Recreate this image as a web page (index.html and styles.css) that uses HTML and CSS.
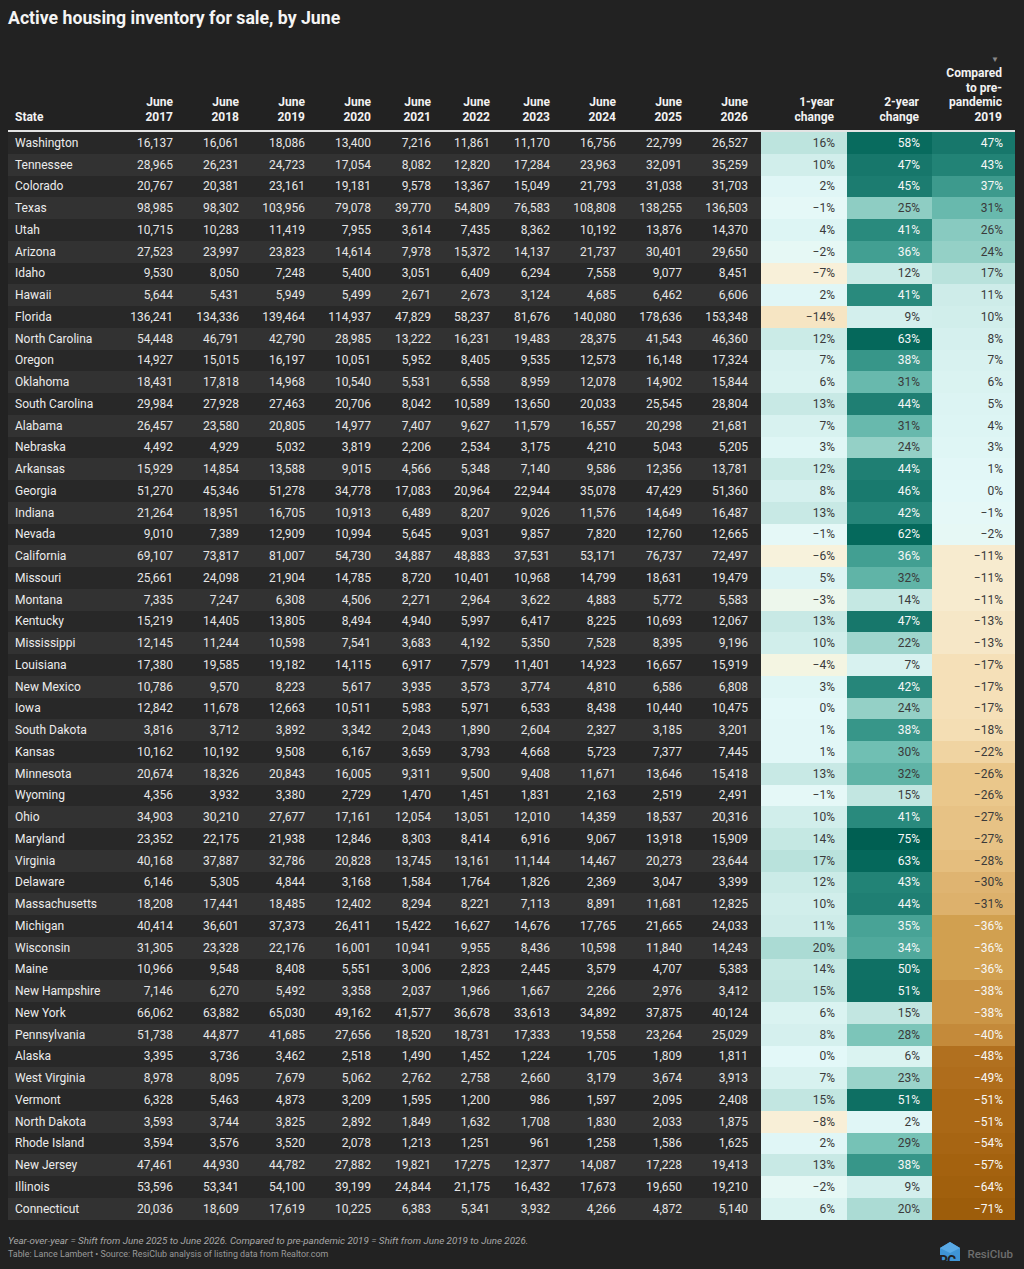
FILE: index.html
```html
<!DOCTYPE html>
<html lang="en">
<head>
<meta charset="utf-8">
<title>Active housing inventory for sale, by June</title>
<link rel="stylesheet" href="styles.css">
</head>
<body>
<div class="page">
  <h1 class="title">Active housing inventory for sale, by June</h1>
  <table class="inv">
    <colgroup>
      <col class="c-state"><col class="c-w"><col class="c-w"><col class="c-w"><col class="c-w">
      <col class="c-n"><col class="c-n2"><col class="c-n"><col class="c-w"><col class="c-w"><col class="c-w">
      <col class="c-h1"><col class="c-h2"><col class="c-h3">
    </colgroup>
    <thead>
      <tr>
        <th class="state">State</th>
        <th>June<br>2017</th><th>June<br>2018</th><th>June<br>2019</th><th>June<br>2020</th><th>June<br>2021</th>
        <th>June<br>2022</th><th>June<br>2023</th><th>June<br>2024</th><th>June<br>2025</th><th>June<br>2026</th>
        <th>1-year<br>change</th><th>2-year<br>change</th>
        <th><span class="sort">▼</span>Compared<br>to pre-<br>pandemic<br>2019</th>
      </tr>
    </thead>
    <tbody>
<tr><td class="state">Washington</td><td>16,137</td><td>16,061</td><td>18,086</td><td>13,400</td><td>7,216</td><td>11,861</td><td>11,170</td><td>16,756</td><td>22,799</td><td>26,527</td><td class="heat">16%</td><td class="heat">58%</td><td class="heat">47%</td></tr>
<tr><td class="state">Tennessee</td><td>28,965</td><td>26,231</td><td>24,723</td><td>17,054</td><td>8,082</td><td>12,820</td><td>17,284</td><td>23,963</td><td>32,091</td><td>35,259</td><td class="heat">10%</td><td class="heat">47%</td><td class="heat">43%</td></tr>
<tr><td class="state">Colorado</td><td>20,767</td><td>20,381</td><td>23,161</td><td>19,181</td><td>9,578</td><td>13,367</td><td>15,049</td><td>21,793</td><td>31,038</td><td>31,703</td><td class="heat">2%</td><td class="heat">45%</td><td class="heat">37%</td></tr>
<tr><td class="state">Texas</td><td>98,985</td><td>98,302</td><td>103,956</td><td>79,078</td><td>39,770</td><td>54,809</td><td>76,583</td><td>108,808</td><td>138,255</td><td>136,503</td><td class="heat">−1%</td><td class="heat">25%</td><td class="heat">31%</td></tr>
<tr><td class="state">Utah</td><td>10,715</td><td>10,283</td><td>11,419</td><td>7,955</td><td>3,614</td><td>7,435</td><td>8,362</td><td>10,192</td><td>13,876</td><td>14,370</td><td class="heat">4%</td><td class="heat">41%</td><td class="heat">26%</td></tr>
<tr><td class="state">Arizona</td><td>27,523</td><td>23,997</td><td>23,823</td><td>14,614</td><td>7,978</td><td>15,372</td><td>14,137</td><td>21,737</td><td>30,401</td><td>29,650</td><td class="heat">−2%</td><td class="heat">36%</td><td class="heat">24%</td></tr>
<tr><td class="state">Idaho</td><td>9,530</td><td>8,050</td><td>7,248</td><td>5,400</td><td>3,051</td><td>6,409</td><td>6,294</td><td>7,558</td><td>9,077</td><td>8,451</td><td class="heat">−7%</td><td class="heat">12%</td><td class="heat">17%</td></tr>
<tr><td class="state">Hawaii</td><td>5,644</td><td>5,431</td><td>5,949</td><td>5,499</td><td>2,671</td><td>2,673</td><td>3,124</td><td>4,685</td><td>6,462</td><td>6,606</td><td class="heat">2%</td><td class="heat">41%</td><td class="heat">11%</td></tr>
<tr><td class="state">Florida</td><td>136,241</td><td>134,336</td><td>139,464</td><td>114,937</td><td>47,829</td><td>58,237</td><td>81,676</td><td>140,080</td><td>178,636</td><td>153,348</td><td class="heat">−14%</td><td class="heat">9%</td><td class="heat">10%</td></tr>
<tr><td class="state">North Carolina</td><td>54,448</td><td>46,791</td><td>42,790</td><td>28,985</td><td>13,222</td><td>16,231</td><td>19,483</td><td>28,375</td><td>41,543</td><td>46,360</td><td class="heat">12%</td><td class="heat">63%</td><td class="heat">8%</td></tr>
<tr><td class="state">Oregon</td><td>14,927</td><td>15,015</td><td>16,197</td><td>10,051</td><td>5,952</td><td>8,405</td><td>9,535</td><td>12,573</td><td>16,148</td><td>17,324</td><td class="heat">7%</td><td class="heat">38%</td><td class="heat">7%</td></tr>
<tr><td class="state">Oklahoma</td><td>18,431</td><td>17,818</td><td>14,968</td><td>10,540</td><td>5,531</td><td>6,558</td><td>8,959</td><td>12,078</td><td>14,902</td><td>15,844</td><td class="heat">6%</td><td class="heat">31%</td><td class="heat">6%</td></tr>
<tr><td class="state">South Carolina</td><td>29,984</td><td>27,928</td><td>27,463</td><td>20,706</td><td>8,042</td><td>10,589</td><td>13,650</td><td>20,033</td><td>25,545</td><td>28,804</td><td class="heat">13%</td><td class="heat">44%</td><td class="heat">5%</td></tr>
<tr><td class="state">Alabama</td><td>26,457</td><td>23,580</td><td>20,805</td><td>14,977</td><td>7,407</td><td>9,627</td><td>11,579</td><td>16,557</td><td>20,298</td><td>21,681</td><td class="heat">7%</td><td class="heat">31%</td><td class="heat">4%</td></tr>
<tr><td class="state">Nebraska</td><td>4,492</td><td>4,929</td><td>5,032</td><td>3,819</td><td>2,206</td><td>2,534</td><td>3,175</td><td>4,210</td><td>5,043</td><td>5,205</td><td class="heat">3%</td><td class="heat">24%</td><td class="heat">3%</td></tr>
<tr><td class="state">Arkansas</td><td>15,929</td><td>14,854</td><td>13,588</td><td>9,015</td><td>4,566</td><td>5,348</td><td>7,140</td><td>9,586</td><td>12,356</td><td>13,781</td><td class="heat">12%</td><td class="heat">44%</td><td class="heat">1%</td></tr>
<tr><td class="state">Georgia</td><td>51,270</td><td>45,346</td><td>51,278</td><td>34,778</td><td>17,083</td><td>20,964</td><td>22,944</td><td>35,078</td><td>47,429</td><td>51,360</td><td class="heat">8%</td><td class="heat">46%</td><td class="heat">0%</td></tr>
<tr><td class="state">Indiana</td><td>21,264</td><td>18,951</td><td>16,705</td><td>10,913</td><td>6,489</td><td>8,207</td><td>9,026</td><td>11,576</td><td>14,649</td><td>16,487</td><td class="heat">13%</td><td class="heat">42%</td><td class="heat">−1%</td></tr>
<tr><td class="state">Nevada</td><td>9,010</td><td>7,389</td><td>12,909</td><td>10,994</td><td>5,645</td><td>9,031</td><td>9,857</td><td>7,820</td><td>12,760</td><td>12,665</td><td class="heat">−1%</td><td class="heat">62%</td><td class="heat">−2%</td></tr>
<tr><td class="state">California</td><td>69,107</td><td>73,817</td><td>81,007</td><td>54,730</td><td>34,887</td><td>48,883</td><td>37,531</td><td>53,171</td><td>76,737</td><td>72,497</td><td class="heat">−6%</td><td class="heat">36%</td><td class="heat">−11%</td></tr>
<tr><td class="state">Missouri</td><td>25,661</td><td>24,098</td><td>21,904</td><td>14,785</td><td>8,720</td><td>10,401</td><td>10,968</td><td>14,799</td><td>18,631</td><td>19,479</td><td class="heat">5%</td><td class="heat">32%</td><td class="heat">−11%</td></tr>
<tr><td class="state">Montana</td><td>7,335</td><td>7,247</td><td>6,308</td><td>4,506</td><td>2,271</td><td>2,964</td><td>3,622</td><td>4,883</td><td>5,772</td><td>5,583</td><td class="heat">−3%</td><td class="heat">14%</td><td class="heat">−11%</td></tr>
<tr><td class="state">Kentucky</td><td>15,219</td><td>14,405</td><td>13,805</td><td>8,494</td><td>4,940</td><td>5,997</td><td>6,417</td><td>8,225</td><td>10,693</td><td>12,067</td><td class="heat">13%</td><td class="heat">47%</td><td class="heat">−13%</td></tr>
<tr><td class="state">Mississippi</td><td>12,145</td><td>11,244</td><td>10,598</td><td>7,541</td><td>3,683</td><td>4,192</td><td>5,350</td><td>7,528</td><td>8,395</td><td>9,196</td><td class="heat">10%</td><td class="heat">22%</td><td class="heat">−13%</td></tr>
<tr><td class="state">Louisiana</td><td>17,380</td><td>19,585</td><td>19,182</td><td>14,115</td><td>6,917</td><td>7,579</td><td>11,401</td><td>14,923</td><td>16,657</td><td>15,919</td><td class="heat">−4%</td><td class="heat">7%</td><td class="heat">−17%</td></tr>
<tr><td class="state">New Mexico</td><td>10,786</td><td>9,570</td><td>8,223</td><td>5,617</td><td>3,935</td><td>3,573</td><td>3,774</td><td>4,810</td><td>6,586</td><td>6,808</td><td class="heat">3%</td><td class="heat">42%</td><td class="heat">−17%</td></tr>
<tr><td class="state">Iowa</td><td>12,842</td><td>11,678</td><td>12,663</td><td>10,511</td><td>5,983</td><td>5,971</td><td>6,533</td><td>8,438</td><td>10,440</td><td>10,475</td><td class="heat">0%</td><td class="heat">24%</td><td class="heat">−17%</td></tr>
<tr><td class="state">South Dakota</td><td>3,816</td><td>3,712</td><td>3,892</td><td>3,342</td><td>2,043</td><td>1,890</td><td>2,604</td><td>2,327</td><td>3,185</td><td>3,201</td><td class="heat">1%</td><td class="heat">38%</td><td class="heat">−18%</td></tr>
<tr><td class="state">Kansas</td><td>10,162</td><td>10,192</td><td>9,508</td><td>6,167</td><td>3,659</td><td>3,793</td><td>4,668</td><td>5,723</td><td>7,377</td><td>7,445</td><td class="heat">1%</td><td class="heat">30%</td><td class="heat">−22%</td></tr>
<tr><td class="state">Minnesota</td><td>20,674</td><td>18,326</td><td>20,843</td><td>16,005</td><td>9,311</td><td>9,500</td><td>9,408</td><td>11,671</td><td>13,646</td><td>15,418</td><td class="heat">13%</td><td class="heat">32%</td><td class="heat">−26%</td></tr>
<tr><td class="state">Wyoming</td><td>4,356</td><td>3,932</td><td>3,380</td><td>2,729</td><td>1,470</td><td>1,451</td><td>1,831</td><td>2,163</td><td>2,519</td><td>2,491</td><td class="heat">−1%</td><td class="heat">15%</td><td class="heat">−26%</td></tr>
<tr><td class="state">Ohio</td><td>34,903</td><td>30,210</td><td>27,677</td><td>17,161</td><td>12,054</td><td>13,051</td><td>12,010</td><td>14,359</td><td>18,537</td><td>20,316</td><td class="heat">10%</td><td class="heat">41%</td><td class="heat">−27%</td></tr>
<tr><td class="state">Maryland</td><td>23,352</td><td>22,175</td><td>21,938</td><td>12,846</td><td>8,303</td><td>8,414</td><td>6,916</td><td>9,067</td><td>13,918</td><td>15,909</td><td class="heat">14%</td><td class="heat">75%</td><td class="heat">−27%</td></tr>
<tr><td class="state">Virginia</td><td>40,168</td><td>37,887</td><td>32,786</td><td>20,828</td><td>13,745</td><td>13,161</td><td>11,144</td><td>14,467</td><td>20,273</td><td>23,644</td><td class="heat">17%</td><td class="heat">63%</td><td class="heat">−28%</td></tr>
<tr><td class="state">Delaware</td><td>6,146</td><td>5,305</td><td>4,844</td><td>3,168</td><td>1,584</td><td>1,764</td><td>1,826</td><td>2,369</td><td>3,047</td><td>3,399</td><td class="heat">12%</td><td class="heat">43%</td><td class="heat">−30%</td></tr>
<tr><td class="state">Massachusetts</td><td>18,208</td><td>17,441</td><td>18,485</td><td>12,402</td><td>8,294</td><td>8,221</td><td>7,113</td><td>8,891</td><td>11,681</td><td>12,825</td><td class="heat">10%</td><td class="heat">44%</td><td class="heat">−31%</td></tr>
<tr><td class="state">Michigan</td><td>40,414</td><td>36,601</td><td>37,373</td><td>26,411</td><td>15,422</td><td>16,627</td><td>14,676</td><td>17,765</td><td>21,665</td><td>24,033</td><td class="heat">11%</td><td class="heat">35%</td><td class="heat">−36%</td></tr>
<tr><td class="state">Wisconsin</td><td>31,305</td><td>23,328</td><td>22,176</td><td>16,001</td><td>10,941</td><td>9,955</td><td>8,436</td><td>10,598</td><td>11,840</td><td>14,243</td><td class="heat">20%</td><td class="heat">34%</td><td class="heat">−36%</td></tr>
<tr><td class="state">Maine</td><td>10,966</td><td>9,548</td><td>8,408</td><td>5,551</td><td>3,006</td><td>2,823</td><td>2,445</td><td>3,579</td><td>4,707</td><td>5,383</td><td class="heat">14%</td><td class="heat">50%</td><td class="heat">−36%</td></tr>
<tr><td class="state">New Hampshire</td><td>7,146</td><td>6,270</td><td>5,492</td><td>3,358</td><td>2,037</td><td>1,966</td><td>1,667</td><td>2,266</td><td>2,976</td><td>3,412</td><td class="heat">15%</td><td class="heat">51%</td><td class="heat">−38%</td></tr>
<tr><td class="state">New York</td><td>66,062</td><td>63,882</td><td>65,030</td><td>49,162</td><td>41,577</td><td>36,678</td><td>33,613</td><td>34,892</td><td>37,875</td><td>40,124</td><td class="heat">6%</td><td class="heat">15%</td><td class="heat">−38%</td></tr>
<tr><td class="state">Pennsylvania</td><td>51,738</td><td>44,877</td><td>41,685</td><td>27,656</td><td>18,520</td><td>18,731</td><td>17,333</td><td>19,558</td><td>23,264</td><td>25,029</td><td class="heat">8%</td><td class="heat">28%</td><td class="heat">−40%</td></tr>
<tr><td class="state">Alaska</td><td>3,395</td><td>3,736</td><td>3,462</td><td>2,518</td><td>1,490</td><td>1,452</td><td>1,224</td><td>1,705</td><td>1,809</td><td>1,811</td><td class="heat">0%</td><td class="heat">6%</td><td class="heat">−48%</td></tr>
<tr><td class="state">West Virginia</td><td>8,978</td><td>8,095</td><td>7,679</td><td>5,062</td><td>2,762</td><td>2,758</td><td>2,660</td><td>3,179</td><td>3,674</td><td>3,913</td><td class="heat">7%</td><td class="heat">23%</td><td class="heat">−49%</td></tr>
<tr><td class="state">Vermont</td><td>6,328</td><td>5,463</td><td>4,873</td><td>3,209</td><td>1,595</td><td>1,200</td><td>986</td><td>1,597</td><td>2,095</td><td>2,408</td><td class="heat">15%</td><td class="heat">51%</td><td class="heat">−51%</td></tr>
<tr><td class="state">North Dakota</td><td>3,593</td><td>3,744</td><td>3,825</td><td>2,892</td><td>1,849</td><td>1,632</td><td>1,708</td><td>1,830</td><td>2,033</td><td>1,875</td><td class="heat">−8%</td><td class="heat">2%</td><td class="heat">−51%</td></tr>
<tr><td class="state">Rhode Island</td><td>3,594</td><td>3,576</td><td>3,520</td><td>2,078</td><td>1,213</td><td>1,251</td><td>961</td><td>1,258</td><td>1,586</td><td>1,625</td><td class="heat">2%</td><td class="heat">29%</td><td class="heat">−54%</td></tr>
<tr><td class="state">New Jersey</td><td>47,461</td><td>44,930</td><td>44,782</td><td>27,882</td><td>19,821</td><td>17,275</td><td>12,377</td><td>14,087</td><td>17,228</td><td>19,413</td><td class="heat">13%</td><td class="heat">38%</td><td class="heat">−57%</td></tr>
<tr><td class="state">Illinois</td><td>53,596</td><td>53,341</td><td>54,100</td><td>39,199</td><td>24,844</td><td>21,175</td><td>16,432</td><td>17,673</td><td>19,650</td><td>19,210</td><td class="heat">−2%</td><td class="heat">9%</td><td class="heat">−64%</td></tr>
<tr><td class="state">Connecticut</td><td>20,036</td><td>18,609</td><td>17,619</td><td>10,225</td><td>6,383</td><td>5,341</td><td>3,932</td><td>4,266</td><td>4,872</td><td>5,140</td><td class="heat">6%</td><td class="heat">20%</td><td class="heat">−71%</td></tr>
    </tbody>
  </table>
  <div class="foot">
    <div class="notes">
      <p class="note">Year-over-year = Shift from June 2025 to June 2026. Compared to pre-pandemic 2019 = Shift from June 2019 to June 2026.</p>
      <p class="source">Table: Lance Lambert • Source: ResiClub analysis of listing data from Realtor.com</p>
    </div>
    <div class="brand">
      <svg class="brand-mark" width="24" height="28" viewBox="0 0 24 28" aria-hidden="true">
        <path d="M2 8 L12 2 L22 8 L22 27 L2 27 Z" fill="#3f95d6"/>
        <path d="M2 8 L12 2 L22 8 L12 13 Z" fill="#5aaae6"/>
        <text x="1" y="26" font-family="Roboto, sans-serif" font-weight="700" font-size="14" letter-spacing="-1" fill="#222222">RC</text>
      </svg>
      <span class="brand-name">ResiClub</span>
    </div>
  </div>
</div>
<script src="script.js"></script>
</body>
</html>
```

FILE: styles.css
```css
html, body {
  margin: 0;
  padding: 0;
  background: #222222;
}
body {
  font-family: Roboto, "Liberation Sans", Arial, sans-serif;
  color: #e8e8e8;
}
.page {
  padding: 8px 8px 0 8px;
}
.title {
  margin: 0;
  font-size: 17.7px;
  line-height: 20px;
  font-weight: 700;
  color: #f4f4f4;
}
.inv {
  margin-top: 26px;
  width: 1007px;
  table-layout: fixed;
  border-collapse: collapse;
  border-spacing: 0;
}
.c-state { width: 112px; }
.c-w { width: 66px; }
.c-n { width: 60px; }
.c-n2 { width: 59px; }
.c-h1 { width: 86px; }
.c-h2 { width: 85px; }
.c-h3 { width: 83px; }

.inv th {
  font-size: 12px;
  line-height: 14.5px;
  font-weight: 700;
  color: #f2f2f2;
  text-align: right;
  vertical-align: bottom;
  padding: 0 13px 6px 0;
  border-bottom: 2px solid #e4e4e4;
}
.inv th.state {
  text-align: left;
  padding-left: 7px;
}
.sort {
  display: block;
  font-size: 8px;
  line-height: 12px;
  color: #8a8a8a;
  padding-right: 3px;
  font-weight: 400;
}
.inv td {
  height: 21.76px;
  padding: 0 13px 0 0;
  font-size: 12px;
  line-height: 14px;
  text-align: right;
  white-space: nowrap;
  color: #e6e6e6;
}
.inv td.state {
  text-align: left;
  padding-left: 7px;
  color: #ececec;
}
.inv tbody tr:nth-child(odd) td { background: #282828; }
.inv tbody tr:nth-child(even) td { background: #323232; }
.inv td.heat {
  color: #3a3a3a;
  padding-right: 12px;
}
.inv td.heat.on-dark {
  color: #f7f7f7;
}

.foot {
  display: flex;
  justify-content: space-between;
  align-items: flex-end;
  margin-top: 14px;
  width: 1007px;
}
.notes p {
  margin: 0;
}
.note {
  font-size: 9.8px;
  line-height: 14px;
  font-style: italic;
  color: #a8a8a8;
}
.source {
  font-size: 8.9px;
  line-height: 13px;
  color: #9a9a9a;
}
.brand {
  display: flex;
  align-items: center;
  gap: 5px;
  margin-bottom: -7px;
  margin-right: 2px;
}
.brand-mark { display: block; }
.brand-name {
  font-size: 11.5px;
  color: #6e6e6e;
  font-weight: 500;
}
```

FILE: script.js
```js
(function () {
  var POS = [
    [0, '#e3f8f8'], [5, '#dcf4f3'], [10, '#d1eeeb'], [15, '#c2e6e1'],
    [20, '#abdbd4'], [25, '#8ecdc3'], [30, '#70bfb3'], [35, '#48a396'],
    [40, '#2c8d80'], [45, '#1c7c70'], [50, '#0f7064'], [60, '#066a5d'], [75, '#005f52']
  ];
  var NEG = [
    [0, '#e3f8f8'], [2, '#e6f8f5'], [4, '#f4f5e2'], [7, '#f8f0d9'],
    [10, '#f7edd3'], [14, '#f6e5c3'], [17, '#f5e0b8'], [22, '#f0d4a2'],
    [26, '#eac78b'], [30, '#dfb471'], [36, '#d1a050'], [40, '#c48a3a'],
    [48, '#b1701f'], [51, '#aa6816'], [57, '#a4620f'], [71, '#9d5d0b']
  ];
  function rgb(h) {
    return [parseInt(h.substr(1, 2), 16), parseInt(h.substr(3, 2), 16), parseInt(h.substr(5, 2), 16)];
  }
  function scale(stops, v) {
    if (v <= stops[0][0]) return stops[0][1];
    for (var i = 1; i < stops.length; i++) {
      if (v <= stops[i][0]) {
        var a = stops[i - 1], b = stops[i];
        var t = (v - a[0]) / (b[0] - a[0]);
        var ca = rgb(a[1]), cb = rgb(b[1]);
        var c = ca.map(function (x, k) { return Math.round(x + (cb[k] - x) * t); });
        return 'rgb(' + c.join(',') + ')';
      }
    }
    return stops[stops.length - 1][1];
  }
  var cells = document.querySelectorAll('td.heat');
  for (var i = 0; i < cells.length; i++) {
    var td = cells[i];
    var v = parseFloat(td.textContent.replace('\u2212', '-'));
    td.style.backgroundColor = v >= 0 ? scale(POS, v) : scale(NEG, -v);
    if (v >= 33 || v <= -33) td.classList.add('on-dark');
  }
})();
```
